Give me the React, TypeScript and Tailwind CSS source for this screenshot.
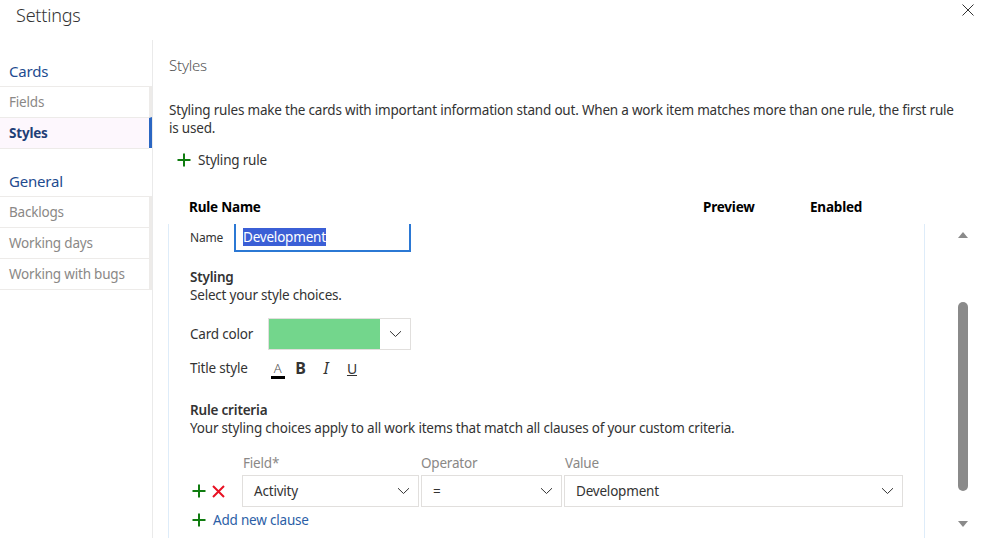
import React from "react";

const Chevron = ({ className = "" }: { className?: string }) => (
  <svg width="13" height="8" viewBox="0 0 13 8" className={className}>
    <path d="M1 1.2 L6.5 6.5 L12 1.2" fill="none" stroke="#333" strokeWidth="1" />
  </svg>
);

const Plus = ({ className = "" }: { className?: string }) => (
  <svg width="14" height="14" viewBox="0 0 14 14" className={className}>
    <path d="M7 0.5 V13.5 M0.5 7 H13.5" stroke="#107c10" strokeWidth="2" />
  </svg>
);

const Cross = () => (
  <svg width="13" height="13" viewBox="0 0 13 13">
    <path d="M1 1 L12 12 M12 1 L1 12" stroke="#e81123" strokeWidth="2" />
  </svg>
);

const NavItem = ({ label, selected = false }: { label: string; selected?: boolean }) => (
  <div
    className={`h-[31px] flex items-center pl-[9px] border-t border-[#edebe9] border-r-[3px] ${
      selected ? "bg-[#fdf7fd] border-r-[#2b66c2] font-bold text-[#1f3f77]" : "border-r-[#edebe9] text-[#8a8886]"
    } text-[13.5px] tracking-[-0.2px]`}
  >
    {label}
  </div>
);

export default function App() {
  return (
    <div className="w-[984px] h-[538px] overflow-hidden bg-white relative font-['Segoe_UI','Noto_Sans',sans-serif] text-[#333] tracking-[-0.2px]">
      {/* header */}
      <div className="h-[40px] flex items-start justify-between">
        <div className="pl-[16px] pt-[2px] text-[18px] font-light text-[#333] leading-[26px]">Settings</div>
        <svg width="12" height="12" viewBox="0 0 12 12" className="mt-[4px] mr-[10px]">
          <path d="M0.5 0.5 L11.5 11.5 M11.5 0.5 L0.5 11.5" stroke="#333" strokeWidth="1" />
        </svg>
      </div>
      <div className="flex h-[498px]">
        {/* sidebar */}
        <div className="w-[153px] shrink-0 border-r border-[#eaeaea]">
          <div className="pl-[9px] pt-[20px] h-[46px] text-[15px] text-[#1e4b8f] leading-[22px]">Cards</div>
          <NavItem label="Fields" />
          <NavItem label="Styles" selected />
          <div className="border-t border-[#edebe9] mr-[3px]" />
          <div className="pl-[9px] pt-[21px] h-[47px] text-[15px] text-[#1e4b8f] leading-[22px]">General</div>
          <NavItem label="Backlogs" />
          <NavItem label="Working days" />
          <NavItem label="Working with bugs" />
          <div className="border-t border-[#edebe9]" />
        </div>
        {/* main */}
        <div className="flex-1 flex flex-col min-w-0">
          <div className="pl-[16px] pt-[14px] text-[15px] font-light text-[#555] leading-[22px]">Styles</div>
          <div className="pl-[16px] pr-[26px] mt-[25px] text-[13.5px] leading-[18px] text-[#333]">
            Styling rules make the cards with important information stand out. When a work item matches more than one rule, the first rule is used.
          </div>
          <div className="flex items-center ml-[24px] mt-[13px] gap-[7px] text-[13.5px]">
            <Plus />
            <span>Styling rule</span>
          </div>
          <div className="flex items-center mt-[28px] text-[13.5px] font-bold text-black leading-[18px]">
            <div className="pl-[36px] w-[550px]">Rule Name</div>
            <div className="w-[107px]">Preview</div>
            <div>Enabled</div>
          </div>
          {/* panel */}
          <div className="flex flex-1 mt-[8px] min-h-0">
            <div className="w-[757px] ml-[15px] border-l border-r border-[#deecf9] pl-[21px] flex flex-col">
              <div className="flex items-center h-[28px]">
                <span className="text-[12px] w-[44px] text-[#333]">Name</span>
                <div className="w-[177px] h-[28px] border-2 border-t-0 border-[#2b78d4] flex items-center pl-[7px]">
                  <span className="bg-[#3b5fd6] text-white text-[13.5px] leading-[18px]">Development</span>
                </div>
              </div>
              <div className="mt-[16px] text-[13.5px] font-semibold leading-[18px] text-[#333]">Styling</div>
              <div className="text-[13.5px] leading-[18px] text-[#333]">Select your style choices.</div>
              <div className="flex items-center mt-[14px]">
                <span className="w-[78px] text-[13.5px]">Card color</span>
                <div className="flex h-[32px] w-[143px] border border-[#e1dfdd]">
                  <div className="w-[111px] bg-[#73d68c]" />
                  <div className="flex-1 flex items-center justify-center">
                    <Chevron />
                  </div>
                </div>
              </div>
              <div className="flex items-center mt-[2px] h-[32px]">
                <span className="w-[80px] text-[13.5px]">Title style</span>
                <div className="flex items-center">
                  <div className="w-[15px] flex flex-col items-center mr-[3px] mt-[4px]">
                    <span className="text-[13px] leading-[14px] text-[#555] font-light">A</span>
                    <div className="w-[14px] h-[3px] bg-black mt-[1px]" />
                  </div>
                  <span className="text-[16px] font-bold text-[#333] w-[25px] text-center">B</span>
                  <span className="text-[16px] italic text-[#333] w-[26px] text-center">I</span>
                  <span className="text-[14px] underline text-[#333] w-[26px] text-center">U</span>
                </div>
              </div>
              <div className="mt-[17px] text-[13.5px] font-semibold leading-[18px]">Rule criteria</div>
              <div className="text-[13.5px] leading-[18px]">Your styling choices apply to all work items that match all clauses of your custom criteria.</div>
              <div className="flex mt-[17px] text-[13.5px] text-[#8a8886] leading-[18px]">
                <span className="ml-[53px] w-[178px]">Field*</span>
                <span className="w-[144px]">Operator</span>
                <span>Value</span>
              </div>
              <div className="flex items-center mt-[3px]">
                <div className="flex items-center gap-[6px] w-[52px] pl-[2px]">
                  <Plus />
                  <Cross />
                </div>
                <div className="w-[177px] h-[32px] border border-[#e1dfdd] flex items-center justify-between pl-[11px] pr-[8px] text-[13.5px]">
                  <span>Activity</span>
                  <Chevron />
                </div>
                <div className="w-[141px] h-[32px] ml-[2px] border border-[#e1dfdd] flex items-center justify-between pl-[11px] pr-[8px] text-[13.5px]">
                  <span>=</span>
                  <Chevron />
                </div>
                <div className="w-[339px] h-[32px] ml-[2px] border border-[#e1dfdd] flex items-center justify-between pl-[11px] pr-[8px] text-[13.5px]">
                  <span>Development</span>
                  <Chevron />
                </div>
              </div>
              <div className="flex items-center gap-[7px] mt-[3px] pl-[2px] text-[13.5px] text-[#2b5ea6]">
                <Plus />
                <span>Add new clause</span>
              </div>
            </div>
            {/* scrollbar */}
            <div className="flex-1 relative">
              <div className="absolute left-[33px] top-[8px] w-0 h-0 border-l-[5px] border-r-[5px] border-b-[6px] border-l-transparent border-r-transparent border-b-[#8a8a8a]" />
              <div className="absolute left-[33px] top-[78px] w-[10px] h-[189px] rounded-full bg-[#8a8a8a]" />
              <div className="absolute left-[33px] top-[297px] w-0 h-0 border-l-[5px] border-r-[5px] border-t-[6px] border-l-transparent border-r-transparent border-t-[#8a8a8a]" />
            </div>
          </div>
        </div>
      </div>
    </div>
  );
}
